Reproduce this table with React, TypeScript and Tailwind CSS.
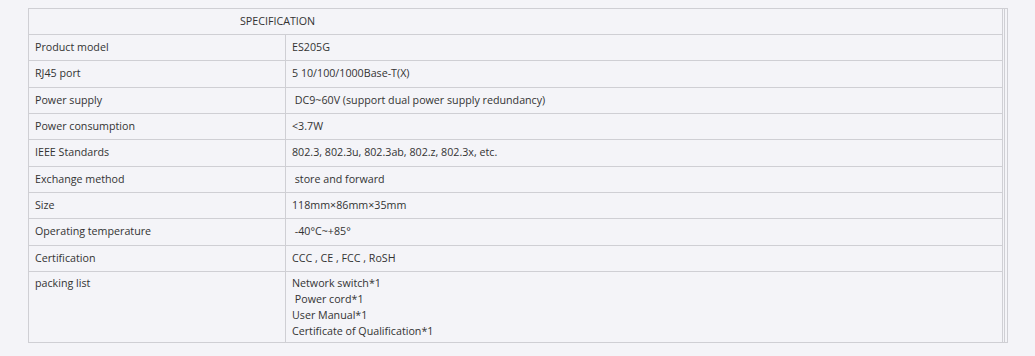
import React from "react";

const rows: { label: string; value: string[]; h: string }[] = [
  { label: "Product model", value: ["ES205G"], h: "h-[26px]" },
  { label: "RJ45 port", value: ["5 10/100/1000Base-T(X)"], h: "h-[27px]" },
  { label: "Power supply", value: [" DC9~60V (support dual power supply redundancy)"], h: "h-[26px]" },
  { label: "Power consumption", value: ["<3.7W"], h: "h-[26px]" },
  { label: "IEEE Standards", value: ["802.3, 802.3u, 802.3ab, 802.z, 802.3x, etc."], h: "h-[27px]" },
  { label: "Exchange method", value: [" store and forward"], h: "h-[26px]" },
  { label: "Size", value: ["118mm×86mm×35mm"], h: "h-[26px]" },
  { label: "Operating temperature", value: [" -40°C~+85°"], h: "h-[27px]" },
  { label: "Certification", value: ["CCC , CE , FCC , RoSH"], h: "h-[26px]" },
];

export default function App() {
  return (
    <div
      className="w-[1035px] h-[356px] bg-[#f4f4f8] pt-[8px] pl-[28px] text-[#333333] text-[10.7px]"
      style={{ fontFamily: '"Open Sans", "Noto Sans", sans-serif' }}
    >
      <div className="w-[980px] h-[335px] border border-[#cfcfd4] flex">
        <div className="w-[974px] border-r border-[#cfcfd4] flex flex-col">
          <div className="h-[26px] border-b border-[#cfcfd4] flex items-center pl-[211px] pb-[1px]">
            SPECIFICATION
          </div>
          {rows.map((r) => (
            <div key={r.label} className={`${r.h} border-b border-[#cfcfd4] flex`}>
              <div className="w-[257px] border-r border-[#cfcfd4] flex items-center pl-[6px] pb-[1px]">
                {r.label}
              </div>
              <div className="flex-1 flex items-center pl-[6px] pb-[1px] whitespace-pre">{r.value[0]}</div>
            </div>
          ))}
          <div className="flex-1 flex">
            <div className="w-[257px] border-r border-[#cfcfd4] pl-[6px] pt-[3px] leading-[16px]">
              packing list
            </div>
            <div className="flex-1 pl-[6px] pt-[3px] leading-[16px] whitespace-pre">
              <div>Network switch*1</div>
              <div> Power cord*1</div>
              <div>User Manual*1</div>
              <div>Certificate of Qualification*1</div>
            </div>
          </div>
        </div>
        <div className="w-[1px]" />
        <div className="w-[1px] bg-[#cfcfd4]" />
        <div className="w-[1px]" />
      </div>
    </div>
  );
}
